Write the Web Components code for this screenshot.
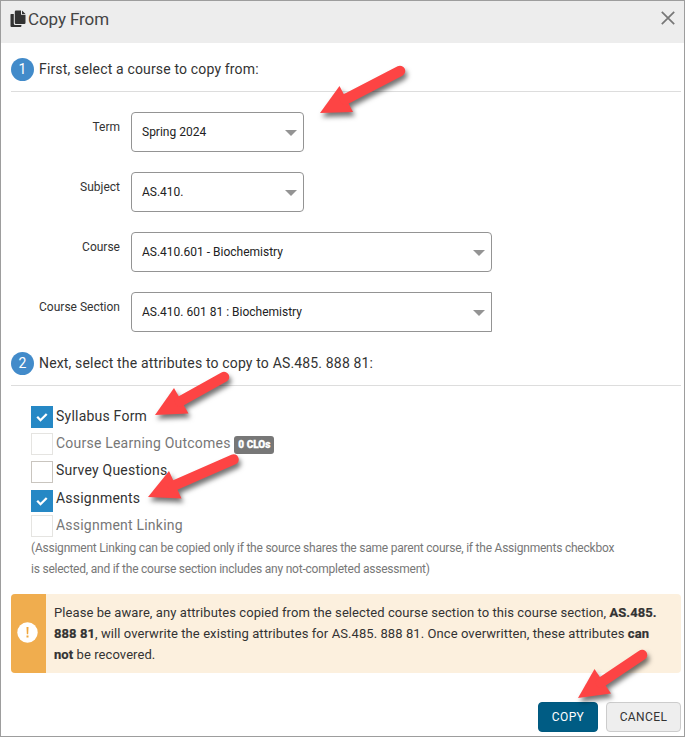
<!DOCTYPE html>
<html lang="en">
<head>
<meta charset="UTF-8">
<title>Copy From</title>
<style>
    html, body { margin: 0; height: 100%; }
    body { font-family: Roboto, "Liberation Sans", sans-serif; color: #333; background: #fff; overflow: hidden; }
</style>
</head>
<body>
<copy-dialog heading="Copy From">
    <step-title number="1">First, select a course to copy from:</step-title>
    <div style="display: flex; flex-direction: column; gap: 20px; padding: 20px 0 20px">
        <form-row label="Term"><select-box>Spring 2024</select-box></form-row>
        <form-row label="Subject"><select-box>AS.410.</select-box></form-row>
        <form-row label="Course"><select-box wide>AS.410.601 - Biochemistry</select-box></form-row>
        <form-row label="Course Section"><select-box wide square>AS.410. 601 81 : Biochemistry</select-box></form-row>
    </div>
    <step-title number="2">Next, select the attributes to copy to AS.485. 888 81:</step-title>
    <attribute-list>
        <check-item checked style="--h: 27px">Syllabus Form</check-item>
        <check-item disabled style="--h: 28px">Course Learning Outcomes <count-badge>0 CLOs</count-badge></check-item>
        <check-item style="--h: 29px; --shift: -1px">Survey Questions</check-item>
        <check-item checked style="--h: 25px; --shift: -2px">Assignments</check-item>
        <check-item disabled style="--h: 23px">Assignment Linking</check-item>
        <span slot="note">(Assignment Linking can be copied only if the source shares the same parent course, if the Assignments checkbox<br>is selected, and if the course section includes any not-completed assessment)</span>
    </attribute-list>
    <warning-box>Please be aware, any attributes copied from the selected course section to this course section, <b>AS.485.<br>888 81</b>, will overwrite the existing attributes for AS.485. 888 81. Once overwritten, these attributes <b>can<br>not</b> be recovered.</warning-box>
    <action-button slot="actions" primary>COPY</action-button>
    <action-button slot="actions">CANCEL</action-button>
</copy-dialog>
<pointer-arrows></pointer-arrows>

<script>
class CopyDialog extends HTMLElement {
    connectedCallback() {
        this.attachShadow({ mode: 'open' });
        this.shadowRoot.innerHTML = `
            <style>
                :host { display: flex; flex-direction: column; box-sizing: border-box; height: 100vh; border: 1px solid #9d9d9d; }
                header {
                    display: flex; align-items: center; height: 42px; box-sizing: border-box;
                    padding: 0 8px 6px 9px; background: #ededed;
                }
                .copy { width: 16px; height: 18px; margin-right: 2px; }
                h1 { flex: 1; margin: 0; font-size: 17px; font-weight: 400; line-height: 24px; letter-spacing: -0.1px; color: #444; }
                .close { width: 16px; height: 16px; margin-bottom: 2px; }
                main { padding: 15px 3px 0 10px; }
                footer { display: flex; justify-content: flex-end; gap: 8px; padding: 29px 3px 0; }
            </style>
            <header>
                <svg class="copy" viewBox="0 0 16 18">
                    <path fill="#333" d="M1 4h2.800v9.400q0 1.600 1.600 1.600h6v1q0 1-1 1H1.500q-1 0-1-1V4.500q0-.5.5-.5z"/>
                    <path fill="#333" d="M6 .5h5v4.300h4.500v8q0 1.200-1.200 1.200H6q-1.200 0-1.200-1.200v-11Q4.800.5 6 .5zM12 .5l3.500 3.400H12z"/>
                </svg>
                <h1>${this.getAttribute('heading')}</h1>
                <svg class="close" viewBox="0 0 16 16"><path d="M1.800 1.800l12.400 12.400M14.200 1.800L1.800 14.200" stroke="#777" stroke-width="1.700"/></svg>
            </header>
            <main><slot></slot></main>
            <footer><slot name="actions"></slot></footer>
        `;
    }
}
customElements.define('copy-dialog', CopyDialog);

class StepTitle extends HTMLElement {
    connectedCallback() {
        this.attachShadow({ mode: 'open' });
        this.shadowRoot.innerHTML = `
            <style>
                :host {
                    display: flex; gap: 5px; height: 33px; border-bottom: 1px solid #ddd;
                    font-size: 14px; line-height: 23px; letter-spacing: 0.16px;
                }
                .num { width: 23px; height: 23px; border-radius: 50%; background: #428bca; color: #fff; text-align: center; }
            </style>
            <span class="num">${this.getAttribute('number')}</span>
            <span><slot></slot></span>
        `;
    }
}
customElements.define('step-title', StepTitle);

class FormRow extends HTMLElement {
    connectedCallback() {
        this.attachShadow({ mode: 'open' });
        this.shadowRoot.innerHTML = `
            <style>
                :host { display: flex; gap: 11px; font-size: 12px; }
                .label { width: 109px; text-align: right; line-height: 30px; }
            </style>
            <span class="label">${this.getAttribute('label')}</span>
            <slot></slot>
        `;
    }
}
customElements.define('form-row', FormRow);

class SelectBox extends HTMLElement {
    connectedCallback() {
        this.attachShadow({ mode: 'open' });
        this.shadowRoot.innerHTML = `
            <style>
                :host {
                    display: flex; align-items: center; justify-content: space-between; box-sizing: border-box;
                    width: 173px; height: 40px; padding: 0 6px 0 10px;
                    border: 1px solid #949494; border-radius: 4px; font-size: 12px; color: #222;
                }
                :host([wide]) { width: 361px; }
                :host([square]) { border-radius: 4px 0 0 4px; }
                i { border: 6px solid transparent; border-top-color: #949494; border-bottom: 0; margin-top: 2px; }
            </style>
            <span><slot></slot></span><i></i>
        `;
    }
}
customElements.define('select-box', SelectBox);

class AttributeList extends HTMLElement {
    connectedCallback() {
        this.attachShadow({ mode: 'open' });
        this.shadowRoot.innerHTML = `
            <style>
                :host { display: block; padding: 20px 0 14px 20px; }
                .note { font-size: 12px; line-height: 21px; letter-spacing: -0.225px; color: #777; white-space: nowrap; }
            </style>
            <slot></slot>
            <div class="note"><slot name="note"></slot></div>
        `;
    }
}
customElements.define('attribute-list', AttributeList);

class CheckItem extends HTMLElement {
    connectedCallback() {
        this.attachShadow({ mode: 'open' });
        this.shadowRoot.innerHTML = `
            <style>
                :host { display: flex; gap: 3px; height: var(--h); font-size: 14px; letter-spacing: 0.22px; }
                :host([disabled]) { color: #777; }
                .box { width: 22px; height: 22px; box-sizing: border-box; border: 1px solid #c9c5bf; background: #fff; }
                :host([disabled]) .box { border-color: #e5e4e1; }
                :host([checked]) .box { border-color: #2688c5; background: #2688c5; }
                svg { display: none; width: 20px; height: 20px; }
                :host([checked]) svg { display: block; }
                .text { line-height: 20px; margin-top: var(--shift, 0); white-space: nowrap; }
            </style>
            <span class="box"><svg viewBox="0 0 20 20"><path d="M5.200 9.800l3.300 3.400 6.200-6.200" fill="none" stroke="#fff" stroke-width="2.300"/></svg></span>
            <span class="text"><slot></slot></span>
        `;
    }
}
customElements.define('check-item', CheckItem);

class CountBadge extends HTMLElement {
    connectedCallback() {
        this.attachShadow({ mode: 'open' });
        this.shadowRoot.innerHTML = `
            <style>
                :host {
                    display: inline-block; box-sizing: border-box; width: 40px; height: 18px; margin: -4px 0; border-radius: 3px;
                    background: #777; color: #fff; text-align: center; vertical-align: 0;
                    font-size: 10px; font-weight: 900; line-height: 18px; letter-spacing: 0;
                    -webkit-text-stroke: 0.3px #fff;
                }
            </style>
            <slot></slot>
        `;
    }
}
customElements.define('count-badge', CountBadge);

class WarningBox extends HTMLElement {
    connectedCallback() {
        this.attachShadow({ mode: 'open' });
        this.shadowRoot.innerHTML = `
            <style>
                :host { display: flex; height: 79px; border-radius: 4px; overflow: hidden; background: #fcf0de; }
                .side { display: flex; align-items: center; width: 35px; background: #f0ad4e; }
                svg { width: 21px; height: 21px; margin: 0 0 3px 6px; }
                .text { padding: 8px 0 0 8px; font-size: 13px; line-height: 21px; letter-spacing: 0.08px; white-space: nowrap; }
                ::slotted(b) { -webkit-text-stroke: 0.2px #333; }
            </style>
            <div class="side">
                <svg viewBox="0 0 21 21"><circle cx="10.500" cy="10.500" r="10.200" fill="#fff"/><path d="M9.500 5h2l-.3 7.200H9.800zM9.500 13.500h2v2h-2z" fill="#f0a63c"/></svg>
            </div>
            <div class="text"><slot></slot></div>
        `;
    }
}
customElements.define('warning-box', WarningBox);

class ActionButton extends HTMLElement {
    connectedCallback() {
        this.attachShadow({ mode: 'open' });
        this.shadowRoot.innerHTML = `
            <style>
                :host {
                    display: block; box-sizing: border-box; width: 75px; height: 30px; text-align: center;
                    border: 1px solid #ccc; border-radius: 4px; background: #eee;
                    font-size: 12px; line-height: 28px; letter-spacing: 0.4px;
                }
                :host([primary]) { width: 60px; border-color: #00597f; background: #005c84; color: #fff; }
            </style>
            <slot></slot>
        `;
    }
}
customElements.define('action-button', ActionButton);

// callout arrows drawn over the dialog
class PointerArrows extends HTMLElement {
    connectedCallback() {
        // tip, two head corners, where the shaft starts, where it ends
        const arrows = [
            [320, 113, 339.5, 86, 353, 112, 345, 99.5, 400, 71],
            [155, 415, 174, 388, 188.5, 413.5, 180, 401.5, 224, 377],
            [148, 497, 169, 471, 181.5, 498.5, 173, 486, 233.5, 459.5],
            [578, 698, 594.5, 669, 611, 693.5, 601, 682.5, 642, 655]
        ];
        this.attachShadow({ mode: 'open' });
        this.shadowRoot.innerHTML = `
            <style>
                :host { display: block; position: absolute; top: 0; left: 0; pointer-events: none; }
                svg { display: block; }
                g { filter: drop-shadow(2px 4px 2.5px rgba(0, 0, 0, 0.55)); }
            </style>
            <svg width="685" height="737">
                ${arrows.map(a => `
                    <g>
                        <polygon points="${a.slice(0, 6).join(' ')}" fill="#fd4444"/>
                        <line x1="${a[6]}" y1="${a[7]}" x2="${a[8]}" y2="${a[9]}" stroke="#fd4444" stroke-width="10.500" stroke-linecap="round"/>
                    </g>`).join('')}
            </svg>
        `;
    }
}
customElements.define('pointer-arrows', PointerArrows);
</script>
</body>
</html>
